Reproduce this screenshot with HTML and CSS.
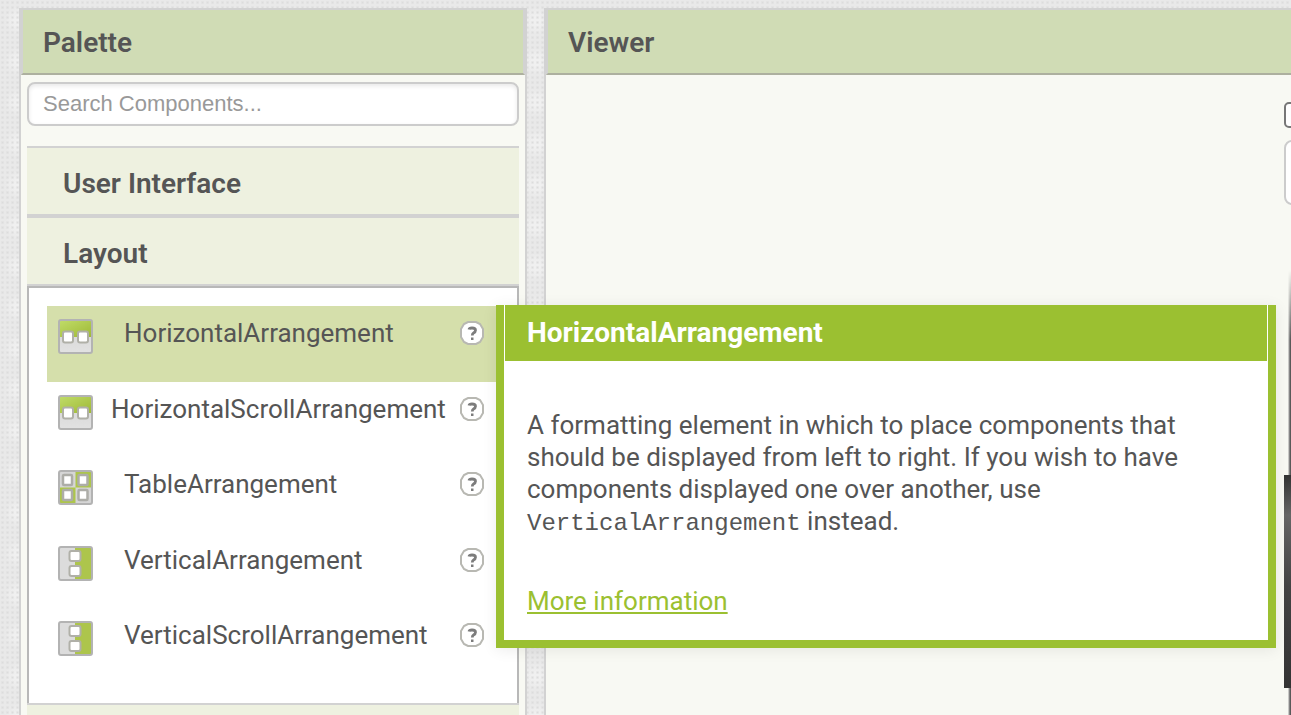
FILE: index.html
```
<!DOCTYPE html>
<html lang="en">
<head>
<meta charset="utf-8">
<title>Designer</title>
<link rel="stylesheet" href="styles.css">
</head>
<body>
<svg class="defs" aria-hidden="true">
  <defs>
    <linearGradient id="green" x1="0" y1="0" x2="1" y2="1"><stop offset="0" stop-color="#bfdb67"/><stop offset="1" stop-color="#9fb936"/></linearGradient>
    <linearGradient id="grey" x1="0" y1="0" x2="0" y2="1"><stop offset="0" stop-color="#d2d2d2"/><stop offset="1" stop-color="#e2e2e2"/></linearGradient>
    <filter id="soft" x="-10%" y="-10%" width="120%" height="120%" color-interpolation-filters="sRGB"><feGaussianBlur stdDeviation="0.5"/></filter>
    <symbol id="horizontal" viewBox="0 0 35 35">
      <g filter="url(#soft)">
        <rect x="1" y="1" width="33" height="33" rx="2" fill="url(#grey)"/>
        <path d="M2 2h31v16H2z" fill="url(#green)"/>
        <rect x="1" y="1" width="33" height="33" rx="2" fill="none" stroke="#b3b3b3" stroke-width="2"/>
        <rect x="5" y="12.500" width="10" height="11" rx="2" fill="#fff" stroke="#b0b0a8" stroke-width="2"/>
        <rect x="20" y="12.500" width="10" height="11" rx="2" fill="#fff" stroke="#b0b0a8" stroke-width="2"/>
      </g>
    </symbol>
    <symbol id="table" viewBox="0 0 35 35">
      <g filter="url(#soft)">
        <rect x="1" y="1" width="33" height="33" rx="2" fill="#d6d6d6"/>
        <path d="M17.500 2H33v15.500H17.500zM2 17.500h15.500V33H2z" fill="#adc54c"/>
        <rect x="1" y="1" width="33" height="33" rx="2" fill="none" stroke="#b3b3b3" stroke-width="2"/>
        <g fill="#fff" stroke="#adada8" stroke-width="2.500">
          <rect x="5" y="5" width="9" height="10" rx="1"/><rect x="20.500" y="5" width="9" height="10" rx="1"/>
          <rect x="5" y="20" width="9" height="10" rx="1"/><rect x="20.500" y="20" width="9" height="10" rx="1"/>
        </g>
      </g>
    </symbol>
    <symbol id="vertical" viewBox="0 0 35 35">
      <g filter="url(#soft)">
        <rect x="1" y="1" width="33" height="33" rx="2" fill="#dcdcdc"/>
        <path d="M17 2h16v31H17z" fill="#adc54c"/>
        <rect x="1" y="1" width="33" height="33" rx="2" fill="none" stroke="#b3b3b3" stroke-width="2"/>
        <rect x="11.500" y="5" width="11" height="10" rx="2" fill="#fff" stroke="#b0b0a8" stroke-width="2"/>
        <rect x="11.500" y="20" width="11" height="10" rx="2" fill="#fff" stroke="#b0b0a8" stroke-width="2"/>
      </g>
    </symbol>
    <symbol id="help" viewBox="0 0 24 24">
      <g filter="url(#soft)">
        <path d="M8 1h8l4 2 3 5v8l-3 5-4 2H8l-4-2-3-5V8l3-5z" fill="#fff" stroke="#b8b8b2" stroke-width="2"/>
        <path d="M9 8.500Q9.300 7 12 7q3.500 0 3.500 2.300 0 1.700-2 2.700-1.200.6-1.200 2.500" fill="none" stroke="#7c7c7c" stroke-width="2.800"/>
        <path d="M11 16.500h2.500V19H11z" fill="#7c7c7c"/>
      </g>
    </symbol>
  </defs>
</svg>
<main class="designer">
  <section class="panel palette">
    <h2 class="panel-title">Palette</h2>
    <div class="palette-body">
      <input class="search" type="text" placeholder="Search Components..." aria-label="Search Components">
      <h3 class="category">User Interface</h3>
      <h3 class="category">Layout</h3>
      <ul class="components">
        <li class="component selected"><svg class="component-icon"><use href="#horizontal"/></svg><span class="component-name">HorizontalArrangement</span><button class="help" aria-label="About HorizontalArrangement"><svg><use href="#help"/></svg></button></li>
        <li class="component long"><svg class="component-icon"><use href="#horizontal"/></svg><span class="component-name">HorizontalScrollArrangement</span><button class="help" aria-label="About HorizontalScrollArrangement"><svg><use href="#help"/></svg></button></li>
        <li class="component"><svg class="component-icon"><use href="#table"/></svg><span class="component-name">TableArrangement</span><button class="help" aria-label="About TableArrangement"><svg><use href="#help"/></svg></button></li>
        <li class="component"><svg class="component-icon"><use href="#vertical"/></svg><span class="component-name">VerticalArrangement</span><button class="help" aria-label="About VerticalArrangement"><svg><use href="#help"/></svg></button></li>
        <li class="component"><svg class="component-icon"><use href="#vertical"/></svg><span class="component-name">VerticalScrollArrangement</span><button class="help" aria-label="About VerticalScrollArrangement"><svg><use href="#help"/></svg></button></li>
      </ul>
      <div class="category"></div>
    </div>
  </section>
  <section class="panel viewer">
    <h2 class="panel-title">Viewer</h2>
    <div class="viewer-body">
      <div class="preview">
        <input class="preview-check" type="checkbox" aria-label="Display hidden components">
        <select class="preview-size" aria-label="Preview size"></select>
        <div class="phone"><div class="phone-buttons"></div></div>
      </div>
    </div>
  </section>
</main>
<aside class="tooltip">
  <h4 class="tooltip-title">HorizontalArrangement</h4>
  <div class="tooltip-body">
    <p>A formatting element in which to place components that should be displayed from left to right. If you wish to have components displayed one over another, use <code>VerticalArrangement</code> instead.</p>
    <a href="#more">More information</a>
  </div>
</aside>
</body>
</html>
```
FILE: styles.css
```
* { box-sizing: border-box; }
html { height: 100%; }
body {
  margin: 0;
  height: 100%;
  overflow: hidden;
  position: relative;
  font: 26px/32px Roboto, sans-serif;
  color: #555;
  background-color: #e9e9e9;
  background-image:
    radial-gradient(circle, #dcdcdc 0, transparent 2px),
    radial-gradient(circle, #f0f0f0 4px, transparent 14px);
  background-size: 5px 5px, 37px 41px;
}
h2, h3, h4, p, ul { margin: 0; padding: 0; }
.defs { position: absolute; width: 0; height: 0; }
.designer {
  display: flex;
  gap: 17px;
  height: 100%;
  padding: 8px 0 0 19px;
}
.panel {
  display: flex;
  flex-direction: column;
  border: solid #d2d2d2;
  border-width: 0 2px;
  background: #f8f9f3;
  overflow: hidden;
}
.palette { flex: 0 0 508px; }
.viewer { flex: 1; border-right: 0; }
.panel-title {
  flex: none;
  padding: 17px 20px 14px;
  border: 2px solid #d2d2d2;
  border-bottom-color: #adb09f;
  background: #d0dcb5;
  font-size: 28px;
  line-height: 32px;
  font-weight: 600;
}
.viewer .panel-title { border-right: 0; }
.palette-body { padding: 7px 6px 0; }
.search {
  display: block;
  width: 100%;
  height: 44px;
  margin-bottom: 20px;
  padding: 0 14px;
  border: 2px solid #ccc;
  border-radius: 8px;
  background: #fff;
  box-shadow: inset 0 2px 4px #e8e8e8;
  font: 22px "Liberation Sans", Arial, sans-serif;
}
.search::placeholder { color: #999; }
.category {
  height: 70px;
  padding: 20px 36px 0;
  border: solid #d2d2d2;
  border-width: 2px 0;
  background: #eef1e0;
  font-size: 28px;
  line-height: 32px;
  font-weight: 600;
}
.components {
  list-style: none;
  padding: 18px 18px 19px;
  border: 2px solid #b8b8b8;
  border-bottom: 0;
  background: #fff;
}
.component {
  display: flex;
  align-items: flex-start;
  height: 75px;
  padding: 13px 13px 0 11px;
}
.component:nth-child(odd) { height: 76px; }
.selected { background: #d5dfab; }
.component-icon { flex: none; width: 35px; height: 35px; }
.component-name { flex: 1; margin: -2px 0 0 31px; white-space: nowrap; }
.long .component-name { margin-left: 18px; }
.help {
  flex: none;
  width: 24px;
  height: 24px;
  margin: 2px 2px 0 0;
  padding: 0;
  border: 0;
  background: none;
}
.help svg { display: block; width: 24px; height: 24px; }
.viewer-body { display: flex; flex: 1; justify-content: flex-end; }
.preview { width: 7px; padding-top: 27px; }
.preview-check, .preview-size {
  appearance: none;
  display: block;
  margin: 0;
  background: #fff;
}
.preview-check { width: 26px; height: 26px; border: 2px solid #777; border-radius: 5px; }
.preview-size { width: 200px; height: 65px; margin-top: 12px; border: 2px solid #ccc; border-radius: 8px; }
.phone {
  width: 60px;
  height: 510px;
  margin-top: 65px;
  padding-top: 205px;
  background: linear-gradient(90deg, transparent 4px, #999 5px, #444 7px);
  -webkit-mask-image: linear-gradient(transparent, #000 70px);
  mask-image: linear-gradient(transparent, #000 70px);
}
.phone-buttons { height: 213px; background: linear-gradient(#333, #666 40px, #444 110px, #333); }
.tooltip {
  position: absolute;
  top: 305px;
  left: 496px;
  right: 15px;
  border: 8px solid #9bc031;
  border-top: 0;
  background: #fff;
  box-shadow: 0 2px 14px rgba(0, 0, 0, 0.08);
}
.tooltip-title {
  margin: 0 1px;
  padding: 12px 22px;
  background: #9bc031;
  color: #fff;
  font-size: 28px;
  line-height: 32px;
  font-weight: 700;
}
.tooltip-body { padding: 48px 23px 23px; }
.tooltip-body p { margin-bottom: 48px; }
.tooltip-body code { font: 24px/24px "Liberation Mono", monospace; }
.tooltip-body a { color: #9bc031; }
```
